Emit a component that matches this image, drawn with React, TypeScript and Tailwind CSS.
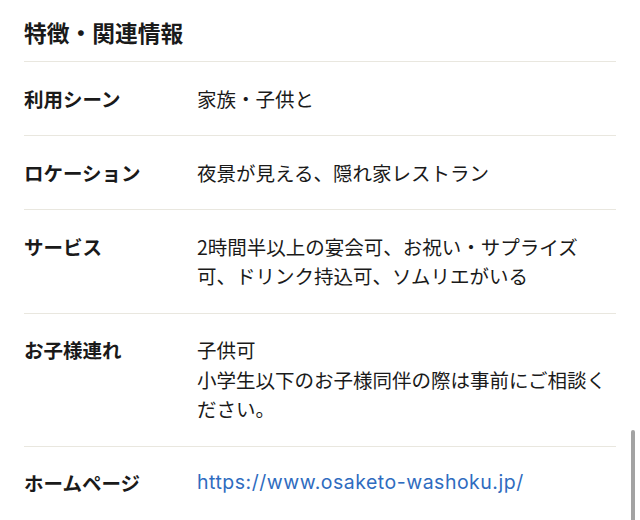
const rows: { label: string; lines: string[]; link?: boolean }[] = [
  { label: "利用シーン", lines: ["家族・子供と"] },
  { label: "ロケーション", lines: ["夜景が見える、隠れ家レストラン"] },
  {
    label: "サービス",
    lines: ["2時間半以上の宴会可、お祝い・サプライズ可、ドリンク持込可、ソムリエがいる"],
  },
  {
    label: "お子様連れ",
    lines: ["子供可", "小学生以下のお子様同伴の際は事前にご相談ください。"],
  },
  { label: "ホームページ", lines: ["https://www.osaketo-washoku.jp/"], link: true },
];

export default function App() {
  return (
    <div
      className="relative h-[520px] w-[640px] overflow-hidden bg-white text-[#1a1a1a]"
      style={{ fontFamily: '"Noto Sans CJK JP", "Noto Sans", sans-serif' }}
    >
      <div className="w-[616px] pl-6">
        <h2 className="border-b border-[#e9e7df] pt-[18px] pb-[13px] text-[22.75px] font-bold leading-[30px]">
          特徴・関連情報
        </h2>

        {rows.map((row) => (
          <div
            key={row.label}
            className="grid grid-cols-[173px_1fr] border-b border-[#e9e7df] py-[21.75px] leading-[29.5px]"
          >
            <div className="text-[19.5px] font-bold">{row.label}</div>
            <div className="text-[19.5px]">
              {row.lines.map((line) =>
                row.link ? (
                  <a
                    key={line}
                    href="#"
                    className="block font-['Inter',sans-serif] text-[19.5px] tracking-[0.5px] text-[#2f6cc0]"
                  >
                    {line}
                  </a>
                ) : (
                  <p key={line}>{line}</p>
                )
              )}
            </div>
          </div>
        ))}
      </div>

      {/* scrollbar */}
      <div className="absolute right-[5px] top-[430px] h-[100px] w-[4px] rounded-full bg-[#a3a3a3]"></div>
    </div>
  );
}
